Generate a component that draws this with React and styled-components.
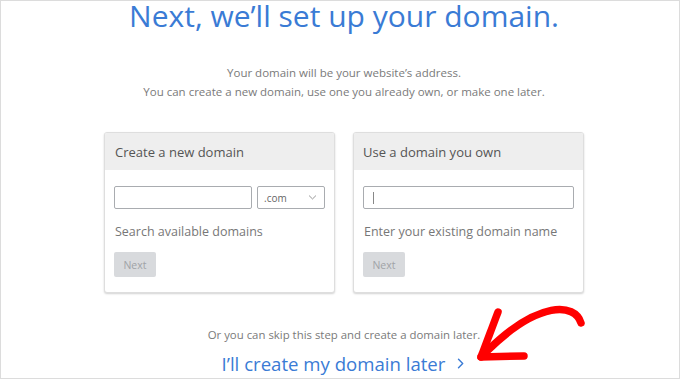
import React from 'react'
import styled, { createGlobalStyle } from 'styled-components'

const GlobalStyle = createGlobalStyle`
  html, body {
    margin: 0;
    padding: 0;
    background: #fff;
  }
  body {
    font-family: "Open Sans", "Noto Sans", sans-serif;
  }
`

const Frame = styled.div`
  position: relative;
  width: 680px;
  height: 379px;
  box-sizing: border-box;
  border: 1px solid #dcdcdc;
  overflow: hidden;
  display: flex;
  flex-direction: column;
  align-items: center;
  padding-left: 8px;
`

const Title = styled.h1`
  margin: 0;
  font-size: 30px;
  font-weight: 400;
  color: #3a7bd5;
  line-height: 30px;
`

const Intro = styled.p`
  margin: 32px 0 0;
  font-size: 11.5px;
  line-height: 19px;
  color: #7a7a7a;
  text-align: center;
`

const Cards = styled.div`
  display: flex;
  gap: 18px;
  margin-top: 31px;
`

const Card = styled.div`
  width: 231px;
  height: 161px;
  box-sizing: border-box;
  border: 1px solid #dedede;
  border-radius: 3px;
  box-shadow: 0 1px 2px rgba(0, 0, 0, 0.18);
  overflow: hidden;
  background: #fff;
`

const CardHead = styled.div`
  height: 37px;
  background: #eeeeee;
  display: flex;
  align-items: center;
  padding-left: ${p => p.$inset}px;
  font-size: 13px;
  color: #555;
`

const CardBody = styled.div`
  padding: 16px 9px 0;
`

const Row = styled.div`
  display: flex;
  gap: 5px;
`

const Input = styled.div`
  position: relative;
  flex: 1;
  height: 23px;
  box-sizing: border-box;
  border: 1px solid #a9acb0;
  border-radius: 2px;
`

const Caret = styled.span`
  position: absolute;
  left: 9px;
  top: 5px;
  width: 1px;
  height: 12px;
  background: #888;
`

const Select = styled.div`
  width: 68px;
  height: 23px;
  box-sizing: border-box;
  border: 1px solid #a9acb0;
  border-radius: 2px;
  display: flex;
  align-items: center;
  justify-content: space-between;
  padding: 0 7px 0 6px;
  font-size: 10px;
  color: #666;
`

const Hint = styled.div`
  margin-top: 14px;
  font-size: 12.5px;
  color: #777;
  padding-left: 1px;
`

const NextButton = styled.div`
  margin-top: 12px;
  width: 42px;
  height: 25px;
  background: #d8dadd;
  border-radius: 2px;
  display: flex;
  align-items: center;
  justify-content: center;
  font-size: 10.5px;
  color: #a0a3a7;
`

const Skip = styled.p`
  margin: 34px 0 0;
  font-size: 11.4px;
  color: #7a7a7a;
`

const Later = styled.div`
  margin-top: 9px;
  display: flex;
  align-items: center;
  gap: 10px;
  font-size: 18.6px;
  color: #3a7bd5;
`

const Arrow = styled.svg`
  position: absolute;
  left: 470px;
  top: 300px;
`

const Chevron = ({ size = 8, color = '#888', dir = 'down', width = 1 }) => (
  <svg width={size} height={size} viewBox="0 0 10 10">
    <path
      d={dir === 'down' ? 'M1.5 3.2 L5 6.6 L8.5 3.2' : 'M3.2 1.2 L7 5 L3.2 8.8'}
      fill="none"
      stroke={color}
      strokeWidth={width}
      strokeLinecap="round"
      strokeLinejoin="round"
    />
  </svg>
)

const App = () => (
  <>
    <GlobalStyle />
    <Frame>
      <Title>Next, we’ll set up your domain.</Title>
      <Intro>
        Your domain will be your website’s address.
        <br />
        You can create a new domain, use one you already own, or make one later.
      </Intro>
      <Cards>
        <Card>
          <CardHead $inset={10}>Create a new domain</CardHead>
          <CardBody>
            <Row>
              <Input />
              <Select>
                .com
                <Chevron size={9} color="#8a8a8a" />
              </Select>
            </Row>
            <Hint>Search available domains</Hint>
            <NextButton>Next</NextButton>
          </CardBody>
        </Card>
        <Card>
          <CardHead $inset={9}>Use a domain you own</CardHead>
          <CardBody>
            <Row>
              <Input>
                <Caret />
              </Input>
            </Row>
            <Hint>Enter your existing domain name</Hint>
            <NextButton>Next</NextButton>
          </CardBody>
        </Card>
      </Cards>
      <Skip>Or you can skip this step and create a domain later.</Skip>
      <Later>
        I’ll create my domain later
        <Chevron size={11} color="#3a7bd5" dir="right" width={1.3} />
      </Later>
      <Arrow width="130" height="75" viewBox="0 0 130 75">
        <g fill="none" stroke="#ff0000" strokeWidth="7.5" strokeLinecap="round" strokeLinejoin="round">
          <path d="M110 22 C104 2, 68 -1, 16 50" />
          <path d="M27 11 L10 56" />
          <path d="M10 56 L53 55" />
        </g>
      </Arrow>
    </Frame>
  </>
)

export default App
